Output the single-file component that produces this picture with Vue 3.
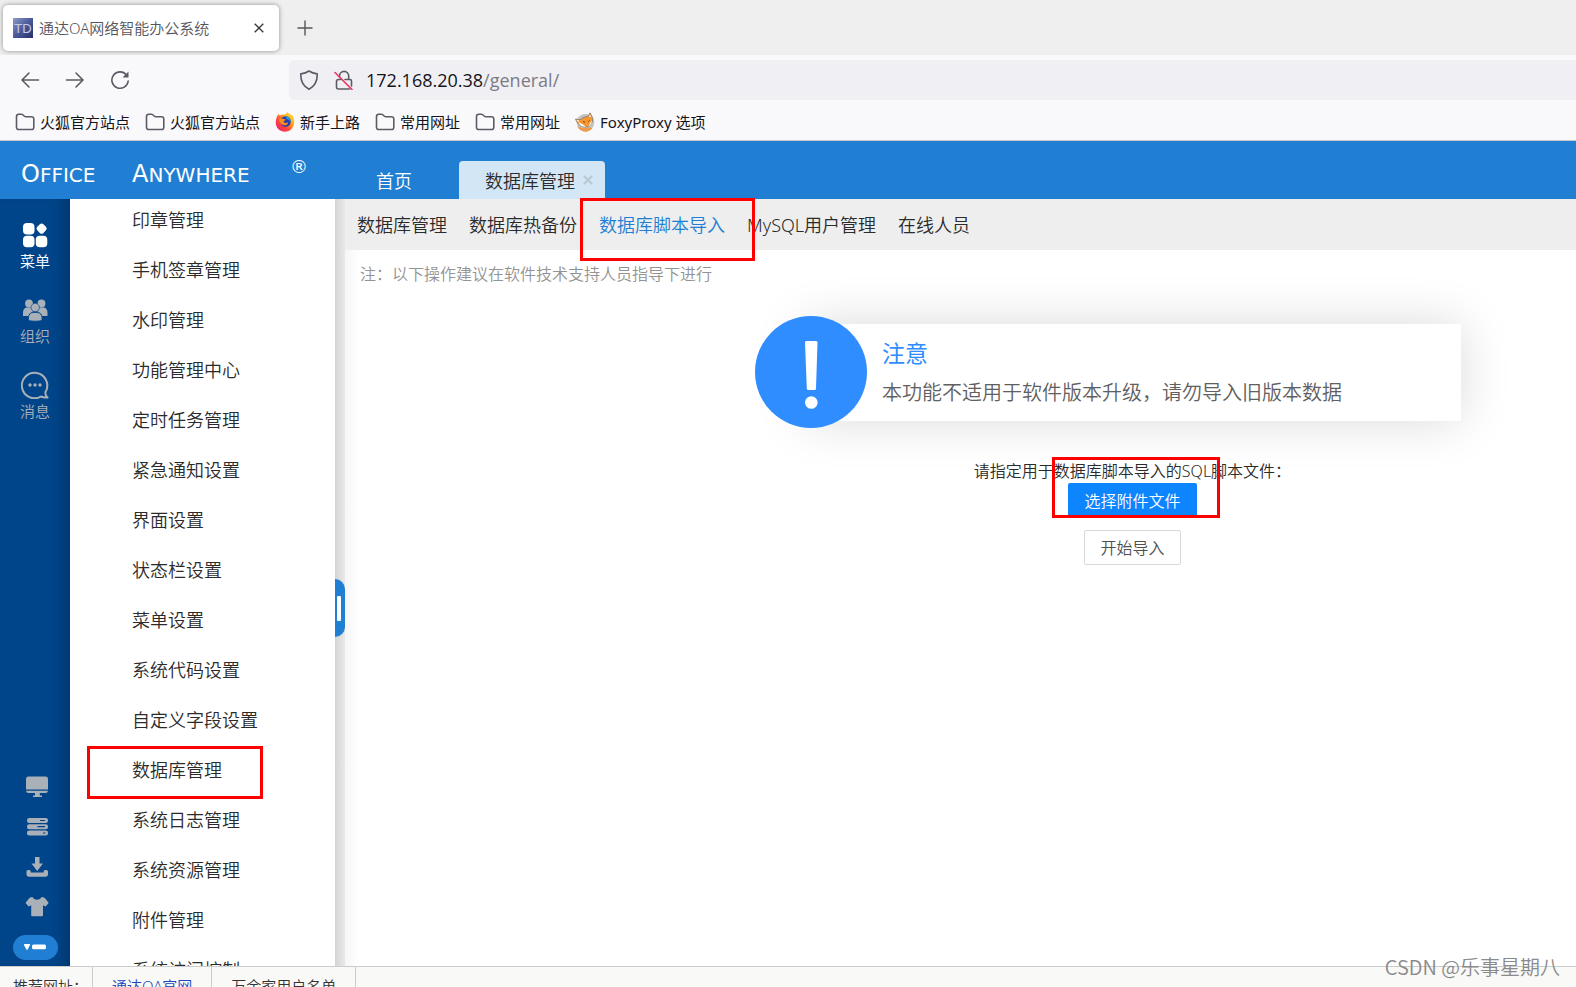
<script setup>
import { ref } from 'vue'

const bookmarks = [
  { icon: 'folder', label: '火狐官方站点' },
  { icon: 'folder', label: '火狐官方站点' },
  { icon: 'firefox', label: '新手上路' },
  { icon: 'folder', label: '常用网址' },
  { icon: 'folder', label: '常用网址' },
  { icon: 'foxy', label: 'FoxyProxy 选项' },
]

const menu = [
  '印章管理', '手机签章管理', '水印管理', '功能管理中心', '定时任务管理', '紧急通知设置',
  '界面设置', '状态栏设置', '菜单设置', '系统代码设置', '自定义字段设置', '数据库管理',
  '系统日志管理', '系统资源管理', '附件管理', '系统访问控制',
]
const markedMenu = '数据库管理'

const subTabs = ['数据库管理', '数据库热备份', '数据库脚本导入', 'MySQL用户管理', '在线人员']
const activeTab = ref('数据库脚本导入')
const url = ref('172.168.20.38/general/')
</script>

<template>
  <div class="screen">
    <div class="tabstrip">
      <div class="browser-tab">
        <svg class="favicon" viewBox="0 0 20 20" aria-hidden="true">
          <defs>
            <linearGradient id="fav" x1="0" y1="0" x2="1" y2="1">
              <stop offset="0" stop-color="#8f9cc8" />
              <stop offset="0.5" stop-color="#4a5a9a" />
              <stop offset="1" stop-color="#252f6c" />
            </linearGradient>
          </defs>
          <rect width="20" height="20" fill="url(#fav)" />
          <text x="10" y="15" text-anchor="middle" font-size="13" fill="#c6cbe2">TD</text>
        </svg>
        <span class="browser-title">通达OA网络智能办公系统</span>
        <button class="plain" aria-label="关闭标签页">
          <svg width="10" height="10" viewBox="0 0 10 10"><path d="M.7.7l8.6 8.6M9.3.7L.7 9.3" stroke="#333" stroke-width="1.3" /></svg>
        </button>
      </div>
      <button class="plain new-tab" aria-label="新建标签页">
        <svg width="16" height="16" viewBox="0 0 16 16"><path d="M8 .5v15M.5 8h15" stroke="#55555c" stroke-width="1.4" /></svg>
      </button>
    </div>

    <div class="toolbar">
      <div class="nav-buttons">
        <button class="plain" aria-label="后退">
          <svg width="20" height="20" viewBox="0 0 20 20" class="line"><path d="M18.500 10H2M9 3L2 10l7 7" /></svg>
        </button>
        <button class="plain" aria-label="前进">
          <svg width="20" height="20" viewBox="0 0 20 20" class="line"><path d="M1.500 10H18M11 3l7 7-7 7" /></svg>
        </button>
        <button class="plain" aria-label="刷新">
          <svg width="20" height="20" viewBox="0 0 20 20" class="line"><path d="M16.500 5A8.200 8.200 0 1 0 18.200 11" /><path d="M18.500 1.500v6h-6z" fill="#5b5b66" stroke="none" /></svg>
        </button>
      </div>
      <div class="urlbar">
        <svg width="20" height="20" viewBox="0 0 20 20" class="line"><path d="M10 1c2.500 1.700 5 2.500 8.200 2.900.3 6.600-1.700 12-8.200 15.400C3.500 15.900 1.500 10.500 1.800 3.900 5 3.500 7.500 2.700 10 1z" /></svg>
        <svg width="20" height="20" viewBox="0 0 20 20" class="line">
          <path d="M5.500 7V6a4.600 4.600 0 0 1 9.200 0v3.500M7 9.500H4.500a2 2 0 0 0-2 2V17a2 2 0 0 0 2 2h11M11 9.500h5a1.500 1.500 0 0 1 1.500 1.500v5" />
          <path d="M1 2.500l17 17" stroke="#f0305f" />
        </svg>
        <label class="url-text">
          <span class="url-shown"><b>{{ url.split('/')[0] }}</b>/{{ url.split('/')[1] }}/</span>
          <input v-model="url" class="url-input" aria-label="地址栏" />
        </label>
      </div>
    </div>

    <nav class="bookmarks">
      <a v-for="(b, i) in bookmarks" :key="i" href="#">
        <svg v-if="b.icon === 'folder'" width="20" height="18" viewBox="0 0 20 18" class="line">
          <path d="M1.500 3.500A2.300 2.300 0 0 1 3.800 1.200h2.700c1 0 1.500.5 2 1.200.6.900 1.200 1.400 2.200 1.400h5.800A2.300 2.300 0 0 1 18.800 6v8.200a2.300 2.300 0 0 1-2.300 2.300H3.800a2.300 2.300 0 0 1-2.300-2.300z" />
        </svg>
        <svg v-else-if="b.icon === 'firefox'" width="20" height="20" viewBox="0 0 20 20">
          <defs>
            <linearGradient id="flame" x1="1" y1="0" x2="0.1" y2="1">
              <stop offset="0" stop-color="#fff04a" />
              <stop offset="0.35" stop-color="#ffb01f" />
              <stop offset="0.65" stop-color="#ff4a33" />
              <stop offset="1" stop-color="#e9187c" />
            </linearGradient>
          </defs>
          <path d="M2 4.500L3.300 2l1.500 1.600C7 2.400 8.500 2.300 10 2.500L12.500 0c.8 1.500 2.400 1.700 3.600 3.200l.4-1.300C19 5 19.600 8 19.200 11.300 18.500 16.500 14.500 19.800 10 19.800 5 19.800.8 16 .8 10.800.8 8.300 1.300 6.300 2 4.500z" fill="url(#flame)" />
          <circle cx="10.500" cy="9.500" r="5.300" fill="#2b3ea8" />
          <path d="M10.500 4.200a5.300 5.300 0 0 1 5.200 6c-.8-1.800-2.200-2.800-4-3z" fill="#1e9be6" />
          <path d="M4 7c1.500-1 3-.8 4.300.1l2.200.2c.1 1-1 1.500-1.800 2 0 1 .7 1.700 2 1.600 1-.1 1.600-.6 2.500-.2-.5 1.800-2 2.700-4 2.500C6 12.900 4 10 4 7z" fill="#ff8a1f" />
        </svg>
        <svg v-else width="20" height="20" viewBox="0 0 20 20">
          <circle cx="10.500" cy="10.500" r="8.800" fill="#c5c3c4" />
          <path d="M2.500 14.500a8.800 8.800 0 0 0 15 1.800l-3-1-6 1z" fill="#ef9a4c" />
          <path d="M.5 7l4.500.8c3-2.300 5.500-3.300 8-3.300L15 .8l2 3.700c1 1.500 1 4-.3 6.500-1.500 2.700-3.500 4-6.200 4-3 0-5-1-6.500-2.500C3 11.500 1.500 10 .5 7z" fill="#f6982f" stroke="#777073" stroke-width=".7" />
          <path d="M3.500 10l3.500 2 4 2.800c-3.500.2-6.500-1.300-7.500-4.800zM14.800 2.500l1.400 2.500-2.200-.3zM16.800 8.500L13.500 14c2-.8 3.700-2.500 3.300-5.500zM1.500 8l2.700.6-1 1.400z" fill="#fff" />
          <path d="M8 9.500l2 .8M13 9.800l1.500-1.500" stroke="#7a3f16" stroke-width="1" />
        </svg>
        <span>{{ b.label }}</span>
      </a>
    </nav>

    <header class="header">
      <div class="logo">
        <span class="word"><span class="cap">O</span>FFICE</span>
        <span class="word"><span class="cap">A</span>NYWHERE</span>
        <span class="reg">®</span>
      </div>
      <button class="home-tab">首页</button>
      <div class="page-tab">
        <span>数据库管理</span>
        <button class="plain" aria-label="关闭">
          <svg width="10" height="10" viewBox="0 0 10 10"><path d="M1 1l8 8M9 1L1 9" stroke="#b9c9d5" stroke-width="2.400" /></svg>
        </button>
      </div>
    </header>

    <div class="body">
      <aside class="rail">
        <nav class="rail-top">
          <a href="#" class="on">
            <svg width="28" height="28" viewBox="0 0 28 28" fill="currentColor">
              <rect x="2" y="2" width="11.500" height="11.500" rx="4" />
              <rect x="2" y="14.800" width="11.500" height="11.500" rx="4" />
              <rect x="14.800" y="14.800" width="11.500" height="11.500" rx="4" />
              <rect x="16.300" y="3.300" width="8.600" height="8.600" rx="2.500" transform="rotate(45 20.600 7.600)" />
            </svg>
            <span>菜单</span>
          </a>
          <a href="#">
            <svg width="28" height="28" viewBox="0 0 28 28" fill="currentColor">
              <circle cx="8" cy="7.500" r="3.900" />
              <circle cx="20.500" cy="7.500" r="3.900" />
              <path d="M2 20v-3.500c0-3 1.700-5 4-5h3c1 0 1.500.5 1.700 1.500.3 1.500 1 2.500 1.500 3C9 16.500 8 18 7.500 20zM26.500 20v-3.500c0-3-1.700-5-4-5h-3c-1 0-1.500.5-1.700 1.500-.3 1.500-1 2.500-1.500 3 3.200.5 4.200 2 4.700 4z" />
              <circle cx="14.200" cy="11.500" r="4.200" stroke="#00458a" stroke-width=".6" />
              <path d="M7.500 24.500v-2.800c0-3 2-5.200 4.600-5.200h4.200c2.600 0 4.700 2.200 4.700 5.200v2.800c-4 .9-9.500.9-13.500 0z" stroke="#00458a" stroke-width=".8" />
            </svg>
            <span>组织</span>
          </a>
          <a href="#">
            <svg width="28" height="28" viewBox="0 0 28 28" fill="none">
              <path d="M24.500 21A12.700 12.700 0 1 0 20 25.500c2 1 4 1.200 6.500.9-1.700-1.200-2.300-3.400-2-5.400z" stroke="currentColor" stroke-width="2" stroke-linejoin="round" />
              <g fill="currentColor"><circle cx="9" cy="14" r="1.700" /><circle cx="14" cy="14" r="1.700" /><circle cx="19" cy="14" r="1.700" /></g>
            </svg>
            <span>消息</span>
          </a>
        </nav>
        <div class="rail-bottom">
          <button class="plain" aria-label="桌面">
            <svg width="24" height="24" viewBox="0 0 24 24" fill="currentColor"><path d="M3.500 1.500h17a2.500 2.500 0 0 1 2.500 2.500v10.500H1V4a2.500 2.500 0 0 1 2.500-2.500zM1 15.800h22a2.500 2.500 0 0 1-2.500 2.200h-5.700v2.500h2.200v1.500H8v-1.500h2V18H3.500A2.500 2.500 0 0 1 1 15.800z" /></svg>
          </button>
          <button class="plain" aria-label="服务">
            <svg width="24" height="24" viewBox="0 0 24 24"><g fill="currentColor"><rect x="2" y="3" width="21" height="5" rx="2.300" /><rect x="2" y="9.200" width="21" height="5" rx="2.300" /><rect x="2" y="15.500" width="21" height="5" rx="2.300" /></g><path d="M15 5.500h5M12.500 11.700H20M18 18h2.500" stroke="#00458a" stroke-width="1.200" /></svg>
          </button>
          <button class="plain" aria-label="下载">
            <svg width="24" height="24" viewBox="0 0 24 24" fill="currentColor"><path d="M10 2h4.500v6.500H18L12.200 16 6.500 8.500H10z" /><path d="M1.500 16.500c0-1 1-1.500 2.200-1.500s2 .4 2 1.500v1h13v-1c0-1.100.9-1.500 2-1.500s2.300.5 2.300 1.500V19c0 1.800-1 2.700-2.500 2.700H4c-1.500 0-2.500-.9-2.500-2.700z" /></svg>
          </button>
          <button class="plain" aria-label="换肤">
            <svg width="24" height="24" viewBox="0 0 24 24" fill="currentColor"><path d="M7.500 2c1.500 3.500 7.500 3.500 9 0 2 .2 3.200.8 4.200 2L23.700 8 20.500 11.500 18 10.300V20a1.200 1.200 0 0 1-1.200 1.200H7.400A1.200 1.200 0 0 1 6.200 20v-9.700L3.700 11.500.5 8l3-4c1-1.200 2-1.800 4-2z" /></svg>
          </button>
        </div>
        <button class="pill" aria-label="展开">
          <svg width="24" height="10" viewBox="0 0 24 10" fill="#fff"><path d="M1.500 1h5a.7.7 0 0 1 .5 1L4.600 6.500a.7.7 0 0 1-1.200 0L1 2a.7.7 0 0 1 .5-1z" /><rect x="9" y="1.500" width="14" height="4.800" rx="1.500" /></svg>
        </button>
      </aside>

      <nav class="sidebar">
        <ul>
          <li v-for="m in menu" :key="m">
            <a href="#">{{ m }}</a>
            <span v-if="m === markedMenu" class="mark mark-menu"></span>
          </li>
        </ul>
      </nav>

      <div class="gutter">
        <button class="handle" aria-label="收起菜单"><i></i></button>
      </div>

      <main class="content">
        <nav class="subtabs">
          <span v-for="t in subTabs" :key="t" class="subtab">
            <button :class="{ active: t === activeTab }" @click="activeTab = t">{{ t }}</button>
            <span v-if="t === '数据库脚本导入'" class="mark mark-tab"></span>
          </span>
        </nav>
        <p class="note">注：以下操作建议在软件技术支持人员指导下进行</p>
        <div class="panel">
          <section class="notice">
            <svg class="notice-icon" viewBox="0 0 112 112" aria-hidden="true">
              <circle cx="56" cy="56" r="56" fill="#2f8dff" />
              <path d="M51.500 25h9.500a1.500 1.500 0 0 1 1.500 1.600L61 72.500a1.500 1.500 0 0 1-1.500 1.500h-6.200a1.500 1.500 0 0 1-1.500-1.500L50 26.600A1.500 1.500 0 0 1 51.500 25z" fill="#fff" />
              <circle cx="56.300" cy="86.500" r="6.300" fill="#fff" />
            </svg>
            <h1>注意</h1>
            <p>本功能不适用于软件版本升级，请勿导入旧版本数据</p>
          </section>
          <form class="upload" @submit.prevent>
            <label for="pick">请指定用于数据库脚本导入的SQL脚本文件：</label>
            <span class="pick-wrap">
              <button id="pick" type="button" class="pick">选择附件文件</button>
              <span class="mark mark-pick"></span>
            </span>
            <button type="submit" class="start">开始导入</button>
          </form>
        </div>
      </main>
    </div>

    <footer class="footer">
      <span class="cell">推荐网址：</span>
      <a href="#" class="cell link">通达OA官网</a>
      <a href="#" class="cell">万余家用户名单</a>
    </footer>
    <div class="watermark">CSDN @乐事星期八</div>
  </div>
</template>

<style>
body {
  margin: 0;
}
</style>

<style scoped>
.screen {
  position: relative;
  display: flex;
  flex-direction: column;
  height: 100vh;
  overflow: hidden;
  background: #fff;
  color: #2b2b2b;
  font-family: "Noto Sans", "Noto Sans CJK SC", sans-serif;
  font-size: 18px;
  font-weight: 350;
}
* {
  box-sizing: border-box;
}
button,
input {
  font: inherit;
  color: inherit;
}
button {
  cursor: pointer;
}
a {
  color: inherit;
  text-decoration: none;
}
svg {
  display: block;
  flex: none;
}
.plain {
  display: flex;
  padding: 0;
  border: 0;
  background: none;
}
.line {
  fill: none;
  stroke: #5b5b66;
  stroke-width: 1.6;
  stroke-linecap: round;
  stroke-linejoin: round;
}
.tabstrip {
  display: flex;
  flex: none;
  align-items: center;
  gap: 18px;
  height: 55px;
  padding: 0 3px;
  background: #efefef;
}
.browser-tab {
  display: flex;
  align-items: center;
  gap: 6px;
  width: 276px;
  height: 46px;
  padding: 0 15px 0 10px;
  border-radius: 5px;
  background: #fff;
  box-shadow: 0 0 5px rgba(0, 0, 0, 0.4);
}
.favicon {
  width: 20px;
  height: 20px;
  font-family: "Liberation Sans", sans-serif;
}
.browser-title {
  flex: 1;
  color: #55555c;
  font-size: 15px;
  white-space: nowrap;
}
.toolbar {
  display: flex;
  flex: none;
  align-items: center;
  height: 50px;
  background: #f9f9fb;
}
.nav-buttons {
  display: flex;
  gap: 25px;
  width: 289px;
  padding-left: 20px;
}
.urlbar {
  display: flex;
  flex: 1;
  align-items: center;
  gap: 15px;
  height: 40px;
  padding-left: 10px;
  border-radius: 5px 0 0 5px;
  background: #f0f0f4;
}
.url-text {
  position: relative;
  flex: 1;
  height: 40px;
  margin-left: -3px;
  color: #7b7b84;
  font-family: "Open Sans", sans-serif;
  font-weight: 400;
  line-height: 40px;
}
.url-shown b {
  color: #15141a;
  font-weight: 400;
}
.url-input {
  position: absolute;
  inset: 0;
  width: 100%;
  padding: 0;
  border: 0;
  outline: 0;
  background: none;
  color: transparent;
  caret-color: #15141a;
}
.bookmarks {
  display: flex;
  flex: none;
  align-items: center;
  gap: 15px;
  height: 36px;
  padding: 0 0 2px 15px;
  border-bottom: 1px solid #c8c8c8;
  background: #f9f9fb;
  color: #15141a;
  font-size: 15px;
  font-weight: 400;
}
.bookmarks a {
  display: flex;
  align-items: center;
  gap: 5px;
  white-space: nowrap;
}
.header {
  display: flex;
  flex: none;
  align-items: flex-end;
  height: 58px;
  background: #217fd3;
  color: #fff;
}
.logo {
  display: grid;
  grid-template-columns: 111px 158px auto;
  align-items: baseline;
  width: 345px;
  height: 42px;
  padding-left: 21px;
  font-family: "DejaVu Sans", sans-serif;
  font-size: 20px;
  font-weight: 400;
  line-height: 34px;
}
.cap {
  font-size: 24px;
}
.reg {
  align-self: start;
  font-size: 18px;
  line-height: 20px;
}
.home-tab {
  width: 98px;
  height: 38px;
  margin-right: 16px;
  padding: 0;
  border: 0;
  background: none;
}
.page-tab {
  display: flex;
  align-items: center;
  gap: 8px;
  height: 38px;
  padding: 0 12px 0 26px;
  border-radius: 4px 4px 0 0;
  background: #d3e6f5;
  color: #2b2b2b;
}
.body {
  display: flex;
  flex: 1;
  min-height: 0;
}
.rail {
  display: flex;
  flex: none;
  flex-direction: column;
  align-items: center;
  width: 70px;
  padding: 22px 0 6px;
  background: #00458a;
  box-shadow: inset -14px 0 14px -8px rgba(0, 0, 0, 0.22);
  color: #a9b0b8;
  font-size: 15px;
}
.rail-top a {
  display: flex;
  flex-direction: column;
  align-items: center;
  height: 75px;
  line-height: 24px;
}
.rail-top .on {
  color: #fff;
}
.rail-bottom {
  display: flex;
  flex: 1;
  flex-direction: column;
  justify-content: flex-end;
  gap: 16px;
  padding: 0 0 16px 4px;
}
.pill {
  display: flex;
  align-items: center;
  justify-content: center;
  width: 45px;
  height: 25px;
  padding: 0;
  border: 0;
  border-radius: 13px;
  background: #217fd3;
}
.sidebar {
  flex: none;
  width: 265px;
  overflow: hidden;
  background: #fff;
}
.sidebar ul {
  display: flex;
  flex-direction: column;
  gap: 8px;
  margin: 0;
  padding: 0;
  list-style: none;
}
.sidebar li {
  position: relative;
  flex: none;
  height: 42px;
  padding-left: 62px;
  line-height: 42px;
}
.mark {
  position: absolute;
  z-index: 2;
  border: 3px solid #f00;
  pointer-events: none;
}
.mark-menu {
  top: -3px;
  left: 17px;
  width: 176px;
  height: 53px;
}
.gutter {
  position: relative;
  flex: none;
  width: 10px;
  background: linear-gradient(90deg, #d4d4d4, #e9e9e9);
}
.handle {
  position: absolute;
  top: 380px;
  left: 0;
  display: flex;
  align-items: center;
  width: 10px;
  height: 58px;
  padding: 0 0 0 2px;
  border: 0;
  border-radius: 0 10px 10px 0;
  background: #217fd3;
}
.handle i {
  width: 4px;
  height: 25px;
  border-radius: 1px;
  background: #fff;
}
.content {
  flex: 1;
  min-width: 0;
  background: linear-gradient(90deg, #f6f6f6, #fff 14px);
}
.subtabs {
  display: flex;
  gap: 22px;
  height: 51px;
  padding-left: 12px;
  background: #eee;
}
.subtab {
  position: relative;
}
.subtab button {
  height: 50px;
  padding: 0;
  border: 0;
  background: none;
  white-space: nowrap;
}
.subtab .active {
  color: #217fd3;
}
.mark-tab {
  top: -1px;
  left: -19px;
  width: 175px;
  height: 63px;
}
.note {
  margin: 0;
  padding-left: 15px;
  color: #939393;
  font-size: 16px;
  line-height: 48px;
}
.panel {
  display: flex;
  flex-direction: column;
  align-items: center;
  padding: 26px 0 0 344px;
}
.notice {
  position: relative;
  width: 657px;
  padding: 9px 0 8px 78px;
  background: #fff;
  box-shadow: 0 0 50px rgba(0, 0, 0, 0.15);
}
.notice-icon {
  position: absolute;
  top: -8px;
  left: -49px;
  width: 112px;
  height: 112px;
}
.notice h1 {
  margin: 0;
  color: #2f8dff;
  font-size: 23px;
  font-weight: 400;
  line-height: 40px;
}
.notice p {
  margin: 0;
  color: #606060;
  font-size: 20px;
  line-height: 40px;
}
.upload {
  display: flex;
  flex-direction: column;
  align-items: center;
  margin-top: 38px;
  font-size: 16px;
  line-height: 24px;
}
.pick-wrap {
  position: relative;
}
.pick {
  display: block;
  width: 129px;
  height: 35px;
  padding: 0;
  border: 0;
  border-radius: 2px;
  background: #0d85ff;
  color: #fff;
}
.mark-pick {
  top: -26px;
  left: -16px;
  width: 168px;
  height: 61px;
}
.start {
  height: 35px;
  margin-top: 12px;
  padding: 0 15px;
  border: 1px solid #d9d9d9;
  border-radius: 2px;
  background: #fff;
  color: #505050;
}
.footer {
  display: flex;
  flex: none;
  height: 21px;
  overflow: hidden;
  border-top: 1px solid #ccc;
  background: #f9f9f7;
  color: #333;
  font-size: 15px;
  line-height: 38px;
}
.cell {
  height: 38px;
  padding: 0 19px;
  border-right: 1px solid #ccc;
}
.cell:first-child {
  padding: 0 4px 0 13px;
}
.link {
  color: #2244c0;
}
.watermark {
  position: absolute;
  right: 16px;
  bottom: 5px;
  color: #8a8a8a;
  font-family: "Noto Sans CJK SC", sans-serif;
  font-size: 20px;
  line-height: 30px;
}
</style>
